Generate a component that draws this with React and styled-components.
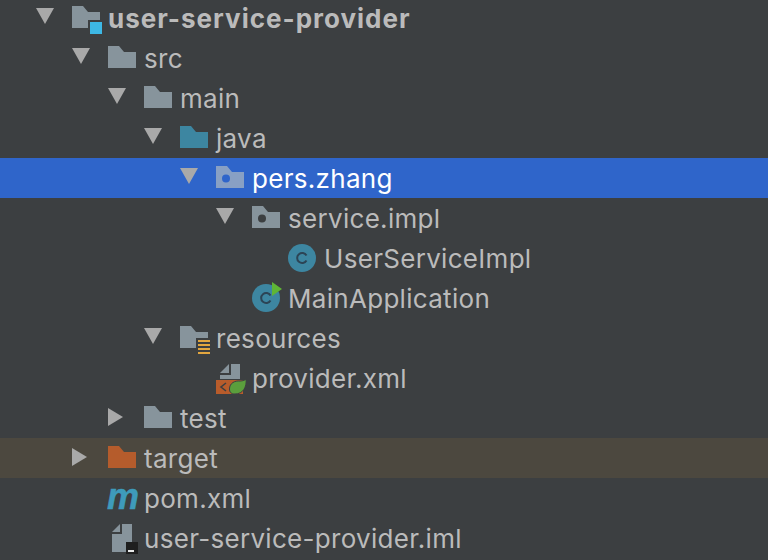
import React from "react";
import styled, { createGlobalStyle } from "styled-components";

const GlobalStyle = createGlobalStyle`
    html, body {
        margin: 0;
        height: 100%;
        background: #3c3f41;
        overflow: hidden;
    }
`;

const Tree = styled.div`
    margin-top: -2px;
    font-family: "Inter", "Liberation Sans", sans-serif;
    font-size: 26px;
    color: #bbbbbb;
`;

const Row = styled.div`
    display: flex;
    align-items: center;
    height: 40px;
    padding-left: ${props => 36 + props.level * 36}px;
    background: ${props =>
        props.selected ? "#2f65ca" : props.excluded ? "#4c483f" : "transparent"};
    color: ${props => (props.selected ? "#ffffff" : "#bbbbbb")};
`;

const Slot = styled.svg`
    flex: none;
    width: 36px;
    height: 40px;
    display: block;
`;

const Label = styled.span`
    white-space: nowrap;
    font-weight: ${props => (props.bold ? 700 : 400)};
    letter-spacing: ${props => (props.bold ? "1px" : "0.3px")};
`;

const MavenMark = styled.span`
    flex: none;
    width: 36px;
    height: 40px;
    line-height: 38px;
    margin-left: -1px;
    margin-right: 1px;
    font-family: "Liberation Sans", sans-serif;
    font-size: 36px;
    font-style: italic;
    font-weight: 700;
    color: #3e9bbb;
    -webkit-text-stroke: 0.5px #3e9bbb;
`;

const GRAY = "#87949c";
const TEAL = "#3d86a1";
const BG = "#3c3f41";

const Arrow = ({ open }) => (
    <Slot viewBox="0 0 36 40">
        {open ? (
            <polygon points="0,10 18,10 9,26" fill="#a9a9a9" />
        ) : (
            <polygon points="0,10 15,19 0,28" fill="#a9a9a9" />
        )}
    </Slot>
);

const folderPath = "M0 8H11L16 14H28V30H0Z";

const Folder = ({ color = GRAY }) => (
    <Slot viewBox="0 0 36 40">
        <path d={folderPath} fill={color} />
    </Slot>
);

const ModuleFolder = () => (
    <Slot viewBox="0 0 36 40">
        <path d={folderPath} fill={GRAY} />
        <rect x="16" y="22" width="16" height="16" fill={BG} />
        <rect x="18" y="24" width="12" height="12" fill="#3db8e5" />
    </Slot>
);

const PackageFolder = ({ selected }) => (
    <Slot viewBox="0 0 36 40">
        <path d={folderPath} fill={selected ? "#88a0c4" : GRAY} />
        <circle cx="10" cy="20.5" r="4" fill={selected ? "#2f65ca" : BG} />
    </Slot>
);

const ResourceFolder = () => (
    <Slot viewBox="0 0 36 40">
        <path d={folderPath} fill={GRAY} />
        <rect x="16" y="20" width="16" height="18" fill={BG} />
        {[22, 26, 30, 34].map(y => (
            <rect key={y} x="18" y={y} width="12" height="2" fill="#e2a63f" />
        ))}
    </Slot>
);

const ClassIcon = ({ runnable }) => (
    <Slot viewBox="0 0 36 40">
        <circle cx="14" cy="20" r="14" fill={TEAL} />
        <path d="M18.5 17.5A5 5 0 1 0 18.5 22.5" fill="none" stroke="#2c4455" strokeWidth="2" />
        {runnable && <polygon points="20,4 30,11 20,18" fill="#5fb536" />}
    </Slot>
);

const XmlIcon = () => (
    <Slot viewBox="0 0 36 40">
        <polygon points="4,15 13,6 13,15" fill={GRAY} />
        <path d="M15 6H24V21H4V17H15Z" fill={GRAY} />
        <rect x="0" y="22" width="27" height="14" fill="#b85c2b" />
        <path d="M10 25L5 29L10 33" fill="none" stroke="#3c3f41" strokeWidth="1.6" />
        <path
            d="M13.5 31C13.5 25 19 22.5 24 23C27 23 29 22 30 21C31 29 27 36 19 36C15 36 13.5 34 13.5 31Z"
            fill="#5b9e3c"
            stroke={BG}
            strokeWidth="1"
        />
    </Slot>
);

const ImlIcon = () => (
    <Slot viewBox="0 0 36 40">
        <polygon points="4,14 12,6 12,14" fill={GRAY} />
        <path d="M14 6H24V24H18V34H4V16H14Z" fill={GRAY} />
        <rect x="18" y="24" width="12" height="12" fill="#1f1f1f" />
        <rect x="20" y="32" width="6" height="2" fill="#e8e8e8" />
    </Slot>
);

const rows = [
    { level: 0, open: true, icon: <ModuleFolder />, label: "user-service-provider", bold: true },
    { level: 1, open: true, icon: <Folder />, label: "src" },
    { level: 2, open: true, icon: <Folder />, label: "main" },
    { level: 3, open: true, icon: <Folder color={TEAL} />, label: "java" },
    { level: 4, open: true, icon: <PackageFolder selected />, label: "pers.zhang", selected: true },
    { level: 5, open: true, icon: <PackageFolder />, label: "service.impl" },
    { level: 6, icon: <ClassIcon />, label: "UserServiceImpl" },
    { level: 5, icon: <ClassIcon runnable />, label: "MainApplication" },
    { level: 3, open: true, icon: <ResourceFolder />, label: "resources" },
    { level: 4, icon: <XmlIcon />, label: "provider.xml" },
    { level: 2, open: false, icon: <Folder />, label: "test" },
    { level: 1, open: false, icon: <Folder color="#b55c2c" />, label: "target", excluded: true },
    { level: 1, icon: <MavenMark>m</MavenMark>, label: "pom.xml" },
    { level: 1, icon: <ImlIcon />, label: "user-service-provider.iml" },
];

export default function App() {
    return (
        <>
            <GlobalStyle />
            <Tree>
                {rows.map(row => (
                    <Row key={row.label} level={row.level} selected={row.selected} excluded={row.excluded}>
                        {row.open === undefined ? <Slot viewBox="0 0 36 40" /> : <Arrow open={row.open} />}
                        {row.icon}
                        <Label bold={row.bold}>{row.label}</Label>
                    </Row>
                ))}
            </Tree>
        </>
    );
}
